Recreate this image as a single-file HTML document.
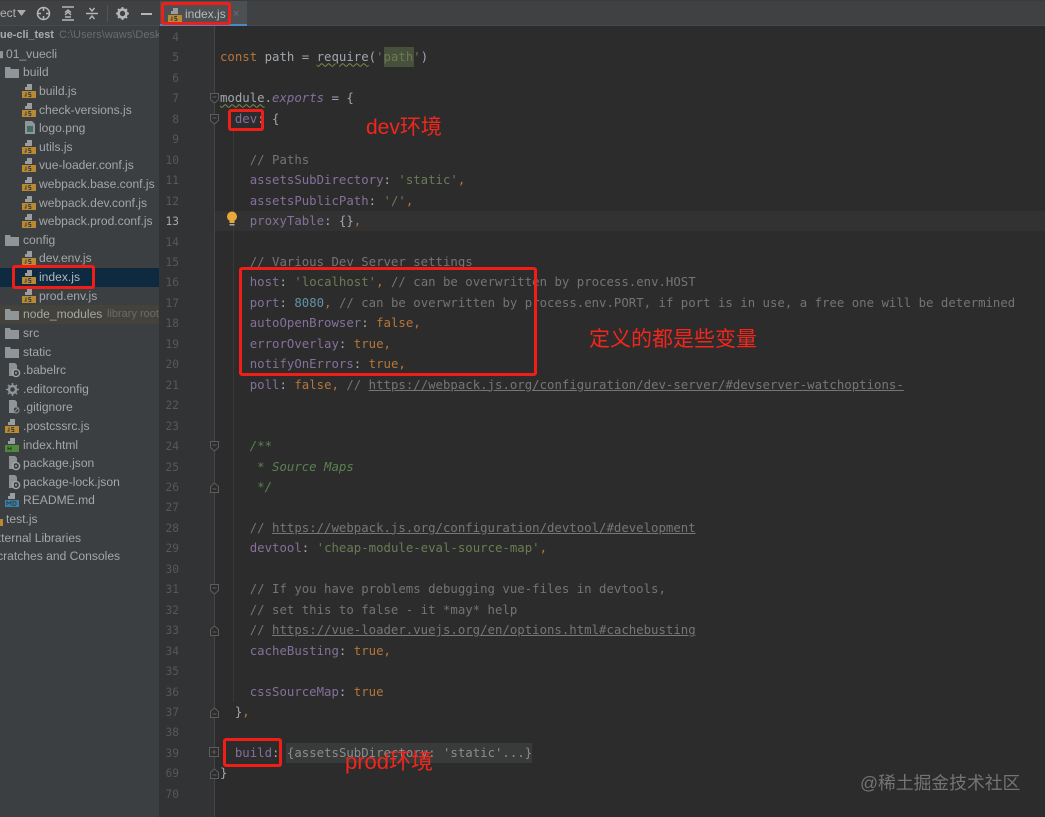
<!DOCTYPE html>
<html><head><meta charset="utf-8"><style>
html,body{margin:0;padding:0;background:#2c2c2c}
#p{position:relative;width:1045px;height:817px;overflow:hidden;background:#2c2c2c;font-family:"Liberation Sans","Noto Sans CJK SC",sans-serif}
.a{position:absolute}
#side{left:0;top:26px;width:159px;height:791px;background:#3c3f41;overflow:hidden}
.r{position:absolute;left:0;width:159px;height:19px;line-height:18px;font-size:12.1px;color:#a3a7aa;white-space:nowrap}
.r span{position:absolute;top:0}
.r svg{position:absolute;top:1px}
#gut{left:159px;top:26px;width:55px;height:791px;background:#313335}
#nums{left:159px;top:28px;width:20px;font:11.2px/20.45px "DejaVu Sans Mono",monospace;color:#56595b;text-align:right}
#code{left:220px;top:27px;margin:0;font:12.35px/20.45px "DejaVu Sans Mono",monospace;color:#a0a7ae;white-space:pre}
.k{color:#b5763c}.s{color:#6a7c55}.c{color:#747474}.u{color:#767676;text-decoration:underline}.p{color:#84709a}.n{color:#6592a8}.g{color:#5a8250;font-style:italic}.i{color:#84709a;font-style:italic}.w{text-decoration:underline wavy #7f8a4c 1px}
.box{position:absolute;border:3px solid #f01e17;border-radius:3px;box-sizing:border-box}
.red{position:absolute;color:#f2261c;white-space:nowrap}
</style></head><body><div id="p">
<svg width="0" height="0" style="position:absolute"><defs>
<symbol id="js" viewBox="0 0 15 16"><path d="M5 1h5v6H5zM3 4h2v3H3z" fill="#9a9ea1"/><rect x="0" y="8" width="14" height="7" fill="#b98a32"/><path d="M4 9.500v3.500H2.500M9 9.500H6.800v2h2v2H6.500" fill="none" stroke="#3c3f41" stroke-width="1"/></symbol>
<symbol id="html" viewBox="0 0 15 16"><path d="M5 1h5v6H5zM3 4h2v3H3z" fill="#9a9ea1"/><rect x="0" y="8" width="14" height="7" fill="#4f8a3a"/><path d="M3 9.500v4M6 9.500v4M3 11.500h3" stroke="#2c3a28" fill="none"/></symbol>
<symbol id="md" viewBox="0 0 15 16"><path d="M5 1h5v6H5zM3 4h2v3H3z" fill="#9a9ea1"/><rect x="0" y="8" width="14" height="7" fill="#3d7fa3"/><path d="M2 13.500v-4l2 2 2-2v4M8 9.500h2l1 1v2l-1 1H8z" stroke="#28485a" fill="none"/></symbol>
<symbol id="cfg" viewBox="0 0 15 16"><path d="M3 1h6l2 2v5H8v6H3z" fill="#8d9193"/><circle cx="10" cy="11" r="3.600" fill="none" stroke="#a0a4a6" stroke-width="1.400"/><circle cx="10" cy="11" r="1" fill="#a0a4a6"/></symbol>
<symbol id="dir" viewBox="0 0 14 12"><path d="M0 1h5l1 2h8v9H0z" fill="#8f9599"/></symbol>
<symbol id="fold" viewBox="0 0 9 11"><path d="M.5.500h8v6l-4 3.500-4-3.500z" fill="#2c2c2c" stroke="#5b5d5e"/><path d="M2.500 4h4" stroke="#5b5d5e"/></symbol>
<symbol id="foldu" viewBox="0 0 9 11"><path d="M.5 10.500h8v-6l-4-3.500-4 3.500z" fill="#2c2c2c" stroke="#5b5d5e"/><path d="M2.500 7h4" stroke="#5b5d5e"/></symbol>
</defs></svg>

<!-- top bar -->
<div class="a" style="left:0;top:0;width:1045px;height:26px;background:#3f4143;border-top:1px solid #393b3d;border-bottom:1px solid #47494b;box-sizing:border-box"></div>
<div class="a" style="left:0;top:5px;font-size:12px;line-height:17px;color:#b0b3b5;white-space:nowrap">ect</div>
<svg class="a" style="left:17px;top:10px" width="9" height="6"><path d="M0 0h9L4.500 6z" fill="#a9adb0"/></svg>
<svg class="a" style="left:36px;top:6px" width="15" height="15" fill="none" stroke="#b4b7b9" stroke-width="1.500"><circle cx="7.500" cy="7.500" r="6"/><path d="M7.500 1v4M7.500 10v4M1 7.500h4M10 7.500h4"/></svg>
<svg class="a" style="left:61px;top:6px" width="14" height="15" fill="none" stroke="#b4b7b9" stroke-width="1.400"><path d="M1 1h12M1 14h12M4 9l3-3 3 3M4 6.500 7 4l3 2.500M4 11h6"/></svg>
<svg class="a" style="left:85px;top:6px" width="14" height="15" fill="none" stroke="#b4b7b9" stroke-width="1.400"><path d="M1 7.500h12M4.500 2 7 5l2.500-3M4.500 13 7 10l2.500 3"/></svg>
<div class="a" style="left:107px;top:5px;width:1px;height:17px;background:#515355"></div>
<svg class="a" style="left:116px;top:7px" width="13" height="13"><circle cx="6.500" cy="6.500" r="4" fill="none" stroke="#b4b7b9" stroke-width="2.600"/><path d="M6.500 0v13M0 6.500h13M2 2l9 9M11 2l-9 9" stroke="#b4b7b9" stroke-width="1.800" stroke-dasharray="2 9 2 0"/></svg>
<div class="a" style="left:141px;top:13px;width:11px;height:2px;background:#b4b7b9"></div>

<!-- tab -->
<div class="a" style="left:160px;top:1px;width:87px;height:23px;background:#4c5052"></div>
<div class="a" style="left:160px;top:24px;width:87px;height:2px;background:#4a88c7"></div>
<svg class="a" style="left:168px;top:7px" width="15" height="16"><use href="#js"/></svg>
<div class="a" style="left:185px;top:5px;font-size:12px;line-height:18px;color:#b6b9bb">index.js</div>
<div class="a" style="left:233px;top:5px;font-size:11px;line-height:18px;color:#6d7072">×</div>

<!-- sidebar -->
<div class="a" id="side">
<div class="a" style="left:0;top:242px;width:159px;height:19px;background:#0d2a40"></div>
<div class="a" style="left:0;top:279px;width:159px;height:19px;background:#44433b"></div>
<div class="r" style="top:0"><span style="left:-6px;font-weight:bold;color:#a9acae;font-size:10.900px">vue-cli_test</span><span style="left:59px;color:#6a6d6f;font-size:11px">C:\Users\waws\Desktop</span></div>
<div class="r" style="top:18.600px"><svg style="left:-8px;top:3px" width="11" height="11"><use href="#dir"/></svg><span style="left:6px">01_vuecli</span></div>
<div class="r" style="top:37.200px"><svg style="left:5px;top:3px" width="14" height="12"><use href="#dir"/></svg><span style="left:23px">build</span></div>
<div class="r" style="top:55.900px"><svg style="left:22px" width="15" height="16"><use href="#js"/></svg><span style="left:39px">build.js</span></div>
<div class="r" style="top:74.500px"><svg style="left:22px" width="15" height="16"><use href="#js"/></svg><span style="left:39px">check-versions.js</span></div>
<div class="r" style="top:93.100px"><svg style="left:24px" width="12" height="15" fill="none"><path d="M1 1h7l3 3v10H1z" fill="#8f9599"/><rect x="3" y="6" width="6" height="6" fill="#3f6f60"/></svg><span style="left:39px">logo.png</span></div>
<div class="r" style="top:111.700px"><svg style="left:22px" width="15" height="16"><use href="#js"/></svg><span style="left:39px">utils.js</span></div>
<div class="r" style="top:130.300px"><svg style="left:22px" width="15" height="16"><use href="#js"/></svg><span style="left:39px">vue-loader.conf.js</span></div>
<div class="r" style="top:148.900px"><svg style="left:22px" width="15" height="16"><use href="#js"/></svg><span style="left:39px">webpack.base.conf.js</span></div>
<div class="r" style="top:167.500px"><svg style="left:22px" width="15" height="16"><use href="#js"/></svg><span style="left:39px">webpack.dev.conf.js</span></div>
<div class="r" style="top:186.200px"><svg style="left:22px" width="15" height="16"><use href="#js"/></svg><span style="left:39px">webpack.prod.conf.js</span></div>
<div class="r" style="top:204.800px"><svg style="left:5px;top:3px" width="14" height="12"><use href="#dir"/></svg><span style="left:23px">config</span></div>
<div class="r" style="top:223.400px"><svg style="left:22px" width="15" height="16"><use href="#js"/></svg><span style="left:39px">dev.env.js</span></div>
<div class="r" style="top:242px"><svg style="left:22px" width="15" height="16"><use href="#js"/></svg><span style="left:39px;color:#b4b8bb">index.js</span></div>
<div class="r" style="top:260.600px"><svg style="left:22px" width="15" height="16"><use href="#js"/></svg><span style="left:39px">prod.env.js</span></div>
<div class="r" style="top:279.200px"><svg style="left:5px;top:3px" width="14" height="12"><use href="#dir"/></svg><span style="left:23px">node_modules</span><span style="left:107px;color:#6a6b6c;font-size:11px">library root</span></div>
<div class="r" style="top:297.900px"><svg style="left:5px;top:3px" width="14" height="12"><use href="#dir"/></svg><span style="left:23px">src</span></div>
<div class="r" style="top:316.500px"><svg style="left:5px;top:3px" width="14" height="12"><use href="#dir"/></svg><span style="left:23px">static</span></div>
<div class="r" style="top:335.100px"><svg style="left:6px" width="15" height="16"><use href="#cfg"/></svg><span style="left:23px">.babelrc</span></div>
<div class="r" style="top:353.700px"><svg style="left:6px;top:3px" width="13" height="13"><circle cx="6.500" cy="6.500" r="3.500" fill="none" stroke="#8f9599" stroke-width="2.400"/><path d="M6.500 0v13M0 6.500h13M2 2l9 9M11 2l-9 9" stroke="#8f9599" stroke-width="1.600" stroke-dasharray="2 9 2 0"/></svg><span style="left:23px">.editorconfig</span></div>
<div class="r" style="top:372.300px"><svg style="left:7px" width="14" height="16" fill="none"><path d="M2 1h6l2 2v5H7v6H2z" fill="#8f9599"/><circle cx="9" cy="11" r="3" stroke="#8f9599"/><path d="m7 13 4-4" stroke="#8f9599"/></svg><span style="left:23px">.gitignore</span></div>
<div class="r" style="top:391px"><svg style="left:5px" width="15" height="16"><use href="#js"/></svg><span style="left:23px">.postcssrc.js</span></div>
<div class="r" style="top:409.600px"><svg style="left:5px" width="15" height="16"><use href="#html"/></svg><span style="left:23px">index.html</span></div>
<div class="r" style="top:428.200px"><svg style="left:6px" width="15" height="16"><use href="#cfg"/></svg><span style="left:23px">package.json</span></div>
<div class="r" style="top:446.800px"><svg style="left:6px" width="15" height="16"><use href="#cfg"/></svg><span style="left:23px">package-lock.json</span></div>
<div class="r" style="top:465.400px"><svg style="left:5px" width="15" height="16"><use href="#md"/></svg><span style="left:23px">README.md</span></div>
<div class="r" style="top:484px"><svg style="left:-11px" width="15" height="16"><use href="#js"/></svg><span style="left:6px">test.js</span></div>
<div class="r" style="top:502.700px"><span style="left:-13px">External Libraries</span></div>
<div class="r" style="top:521.300px"><span style="left:-11px">Scratches and Consoles</span></div>
</div>

<!-- gutter -->
<div class="a" id="gut"></div>
<div class="a" style="left:214px;top:26px;width:1px;height:791px;background:#434546"></div>
<div class="a" style="left:215px;top:211px;width:830px;height:20px;background:#323232"></div>
<div class="a" style="left:233px;top:130px;width:1px;height:572px;background:#393939"></div>
<div class="a" id="nums">4<br>5<br>6<br>7<br>8<br>9<br>10<br>11<br>12<br><span style="color:#a4a7a9">13</span><br>14<br>15<br>16<br>17<br>18<br>19<br>20<br>21<br>22<br>23<br>24<br>25<br>26<br>27<br>28<br>29<br>30<br>31<br>32<br>33<br>34<br>35<br>36<br>37<br>38<br>39<br>69<br>70</div>

<svg class="a" style="left:210px;top:93px" width="9" height="11"><use href="#fold"/></svg>
<svg class="a" style="left:210px;top:114px" width="9" height="11"><use href="#fold"/></svg>
<svg class="a" style="left:210px;top:441px" width="9" height="11"><use href="#fold"/></svg>
<svg class="a" style="left:210px;top:482px" width="9" height="11"><use href="#foldu"/></svg>
<svg class="a" style="left:210px;top:584px" width="9" height="11"><use href="#fold"/></svg>
<svg class="a" style="left:210px;top:625px" width="9" height="11"><use href="#foldu"/></svg>
<svg class="a" style="left:210px;top:707px" width="9" height="11"><use href="#foldu"/></svg>
<svg class="a" style="left:209px;top:747px" width="10" height="10" fill="#2c2c2c" stroke="#5b5d5e"><rect x=".5" y=".5" width="9" height="9"/><path d="M2.500 5h5M5 2.500v5"/></svg>
<svg class="a" style="left:210px;top:768px" width="9" height="11"><use href="#foldu"/></svg>

<!-- code -->
<div class="a" style="left:384px;top:47px;width:30px;height:20px;background:#47503a"></div>
<div class="a" style="left:286px;top:743px;width:246px;height:20px;background:#393a3a"></div>
<pre class="a" id="code">

<span class="k">const</span> path = <span class="w">require</span>(<span class="s">'path'</span>)

<span class="w">module</span>.<span class="i">exports</span> = {
  <span class="p">dev</span>: {

    <span class="c">// Paths</span>
    <span class="p">assetsSubDirectory</span>: <span class="s">'static'</span><span class="k">,</span>
    <span class="p">assetsPublicPath</span>: <span class="s">'/'</span><span class="k">,</span>
    <span class="p">proxyTable</span>: {}<span class="k">,</span>

    <span class="c">// Various Dev Server settings</span>
    <span class="p">host</span>: <span class="s">'localhost'</span><span class="k">,</span> <span class="c">// can be overwritten by process.env.HOST</span>
    <span class="p">port</span>: <span class="n">8080</span><span class="k">,</span> <span class="c">// can be overwritten by process.env.PORT, if port is in use, a free one will be determined</span>
    <span class="p">autoOpenBrowser</span>: <span class="k">false,</span>
    <span class="p">errorOverlay</span>: <span class="k">true,</span>
    <span class="p">notifyOnErrors</span>: <span class="k">true,</span>
    <span class="p">poll</span>: <span class="k">false,</span> <span class="c">// </span><span class="u">https://webpack.js.org/configuration/dev-server/#devserver-watchoptions-</span>


    <span class="g">/**</span>
<span class="g">     * Source Maps</span>
<span class="g">     */</span>

    <span class="c">// </span><span class="u">https://webpack.js.org/configuration/devtool/#development</span>
    <span class="p">devtool</span>: <span class="s">'cheap-module-eval-source-map'</span><span class="k">,</span>

    <span class="c">// If you have problems debugging vue-files in devtools,</span>
    <span class="c">// set this to false - it *may* help</span>
    <span class="c">// </span><span class="u">https://vue-loader.vuejs.org/en/options.html#cachebusting</span>
    <span class="p">cacheBusting</span>: <span class="k">true,</span>

    <span class="p">cssSourceMap</span>: <span class="k">true</span>
  }<span class="k">,</span>

  <span class="p">build</span>: <span style="color:#8a8d8f">{assetsSubDirectory: 'static'...}</span>
}</pre>

<!-- bulb -->
<svg class="a" style="left:226px;top:211px" width="12" height="16"><circle cx="6" cy="5.500" r="5" fill="#e8a93a"/><rect x="3.500" y="10" width="5" height="2" fill="#e8a93a"/><rect x="3.500" y="13" width="5" height="1.500" fill="#a8a8a8"/></svg>

<!-- annotations -->
<div class="box" style="left:161px;top:2px;width:70px;height:23px"></div>
<div class="box" style="left:12px;top:265px;width:83px;height:24px"></div>
<div class="box" style="left:228px;top:109px;width:36px;height:22px"></div>
<div class="box" style="left:239px;top:267px;width:298px;height:109px"></div>
<div class="box" style="left:223px;top:738px;width:59px;height:29px"></div>
<div class="red" style="left:366px;top:113px;font-size:21px;line-height:30px">dev环境</div>
<div class="red" style="left:589px;top:325px;font-size:21px;line-height:30px">定义的都是些变量</div>
<div class="red" style="left:345px;top:747px;font-size:22px;line-height:30px">prod环境</div>
<div class="a" style="left:860px;top:770px;font-size:17.800px;line-height:26px;color:#747474;white-space:nowrap">@稀土掘金技术社区</div>
</div></body></html>
